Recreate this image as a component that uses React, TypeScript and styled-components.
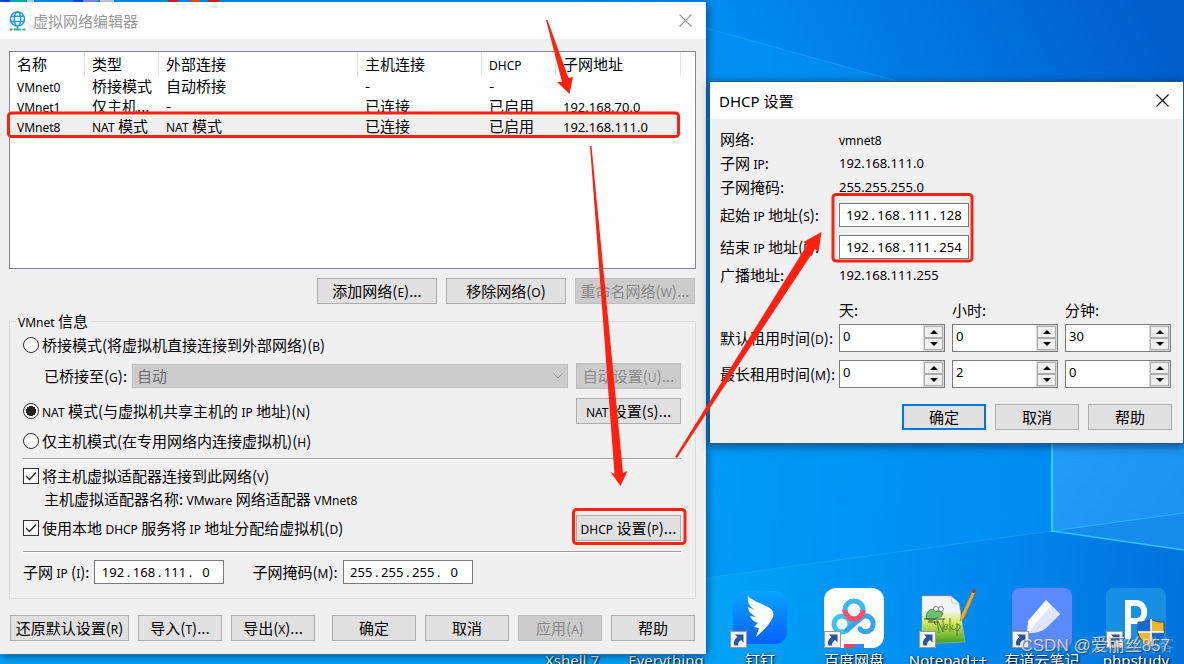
import React from "react";
import styled, { createGlobalStyle, css } from "styled-components";

const cjk = '"Noto Sans CJK SC", sans-serif';
const latin = '"Noto Sans", "Noto Sans CJK SC", sans-serif';
const RED = "#ff2010";

const Global = createGlobalStyle`
  *, *::before, *::after { box-sizing: border-box; }
  body { margin: 0; overflow: hidden; }
  button, input, select { font: inherit; color: inherit; margin: 0; }
`;

const Desktop = styled.main`
  position: relative;
  width: 100%;
  height: 100vh;
  overflow: hidden;
  background: #0090f0;
  font-family: ${cjk};
  font-size: 15px;
  line-height: 20px;
  color: #000;
`;

const Layer = styled.svg`
  position: absolute;
  left: 0;
  top: 0;
  pointer-events: none;
`;

const Window = styled.section<{ $x: number; $y: number; $w: number; $active?: boolean }>`
  position: absolute;
  left: ${(p) => p.$x}px;
  top: ${(p) => p.$y}px;
  width: ${(p) => p.$w}px;
  background: #f0f0f0;
  box-shadow: 1px 2px 9px rgba(0, 20, 60, 0.6);
  ${(p) => p.$active && css`border: 1px solid #1c5a8c;`}
`;

const TitleBar = styled.header<{ $muted?: boolean }>`
  display: flex;
  align-items: center;
  gap: 7px;
  height: 37px;
  padding: 0 14px 0 9px;
  background: #fff;
  font-family: ${latin};
  color: ${(p) => (p.$muted ? "#999" : "#000")};
`;

const Title = styled.h1`
  flex: 1;
  margin: 0;
  font-size: 15px;
  font-weight: 400;
`;

const CloseButton = styled.button`
  display: flex;
  padding: 0;
  border: 0;
  background: none;
`;

const Latin = styled.span`
  font-family: ${latin};
  font-size: 12px;
  line-height: 12px;
`;

const Address = styled.span`
  font-family: ${latin};
  font-size: 13px;
  line-height: 12px;
`;

/* Latin runs are set smaller than the Chinese text around them. */
function T({ s }: { s: string }) {
  return (
    <>
      {s.split(/([A-Za-z0-9]+)/).map((part, i) => (i % 2 ? <Latin key={i}>{part}</Latin> : part))}
    </>
  );
}

const MainBody = styled.div`
  padding: 12px 10px 13px 9px;
`;

const ListBox = styled.div`
  height: 218px;
  border: 1px solid #828790;
  background: #fff;
`;

const NetTable = styled.table`
  width: 671px;
  table-layout: fixed;
  border-collapse: separate;
  border-spacing: 0;
`;

const HeadCell = styled.th<{ $w: number }>`
  width: ${(p) => p.$w}px;
  height: 24px;
  padding: 0 0 0 7px;
  border-right: 1px solid #e5e5e5;
  font-weight: 400;
  text-align: left;
`;

const Row = styled.tr<{ $selected?: boolean }>`
  background: ${(p) => (p.$selected ? "#f0f0f0" : "transparent")};
`;

const Cell = styled.td`
  height: 20px;
  padding: 0 0 0 7px;
  white-space: nowrap;
`;

const Button = styled.button<{ $w: number; $primary?: boolean }>`
  flex: none;
  width: ${(p) => p.$w}px;
  height: 26px;
  padding: 0;
  border: ${(p) => (p.$primary ? "2px solid #0078d7" : "1px solid #adadad")};
  background: #e1e1e1;
  line-height: 20px;
  white-space: nowrap;
  &:disabled {
    border-color: #bfbfbf;
    background: #ccc;
    color: #8a8a8a;
  }
`;

const ListActions = styled.div`
  display: flex;
  justify-content: flex-end;
  gap: 9px;
  padding: 9px 1px 0 0;
`;

const Group = styled.fieldset`
  min-width: 0;
  margin: 7px 0 0;
  padding: 0 14px 11px 13px;
  border: 1px solid #dcdcdc;
`;

const Legend = styled.legend`
  margin-left: -7px;
  padding: 0 2px;
`;

const Line = styled.div<{ $h: number; $indent?: boolean }>`
  display: flex;
  align-items: center;
  gap: 3px;
  height: ${(p) => p.$h}px;
  padding-left: ${(p) => (p.$indent ? 21 : 0)}px;
`;

const Push = styled.span`
  margin-left: auto;
  display: flex;
`;

const Rule = styled.hr`
  height: 2px;
  margin: 5px 0 4px;
  border: 0;
  border-top: 1px solid #a0a0a0;
  background: #fff;
`;

const Radio = styled.input.attrs({ type: "radio" })`
  appearance: none;
  flex: none;
  width: 16px;
  height: 16px;
  border: 1px solid #333;
  border-radius: 50%;
  background: #fff;
  &:checked {
    background: radial-gradient(circle, #222 0 5px, #fff 5px);
  }
`;

const CheckWrap = styled.span`
  position: relative;
  display: flex;
  width: 16px;
  height: 16px;
  svg {
    position: absolute;
    left: 0;
    top: 0;
    pointer-events: none;
  }
`;

const Check = styled.input.attrs({ type: "checkbox" })`
  appearance: none;
  width: 16px;
  height: 16px;
  border: 1px solid #333;
  background: #fff;
`;

const SelectWrap = styled.span`
  position: relative;
  display: flex;
  flex: 1;
  margin: 0 5px 0 2px;
  svg {
    position: absolute;
    right: 5px;
    top: 9px;
    pointer-events: none;
  }
`;

const Select = styled.select`
  appearance: none;
  width: 100%;
  height: 24px;
  padding: 0 4px;
  border: 1px solid #bfbfbf;
  border-radius: 0;
  background: #ccc;
  line-height: 20px;
  &:disabled {
    color: #6d6d6d;
    opacity: 1;
  }
`;

const IpBox = styled.span`
  display: flex;
  align-items: center;
  width: 130px;
  height: 24px;
  padding: 0 0 0 5px;
  border: 1px solid #7a7a7a;
  background: #fff;
  font-family: ${latin};
  font-size: 13px;
`;

const Octet = styled.input`
  width: 25px;
  height: 20px;
  padding: 0;
  border: 0;
  background: none;
  text-align: center;
  line-height: 20px;
`;

const Dot = styled.span`
  width: 6px;
  text-align: center;
`;

function IpField({ id, value }: { id: string; value: string }) {
  return (
    <IpBox>
      {value.split(".").map((octet, i) => (
        <React.Fragment key={i}>
          {i > 0 && <Dot>.</Dot>}
          <Octet id={i === 0 ? id : undefined} aria-label={i ? `${id} ${i + 1}` : undefined} defaultValue={octet} />
        </React.Fragment>
      ))}
    </IpBox>
  );
}

const MaskLabel = styled.label`
  margin-left: 23px;
`;

const FieldLine = styled(Line)`
  gap: 5px;
`;

const Footer = styled.footer`
  display: flex;
  justify-content: space-between;
  padding: 16px 1px 0;
`;

const ButtonSet = styled.div`
  display: flex;
  gap: 9px;
`;

const DhcpBody = styled.div`
  padding: 8px 11px 13px 10px;
`;

const Info = styled.div<{ $h?: number }>`
  display: grid;
  grid-template-columns: 119px 1fr;
  align-items: center;
  height: ${(p) => p.$h ?? 24}px;
  white-space: nowrap;
`;

const LeaseGrid = styled.div`
  display: grid;
  grid-template-columns: 112px repeat(3, 106px);
  grid-template-rows: 20px 36px 36px;
  column-gap: 7px;
  align-items: center;
  margin: 13px 0 12px;
  white-space: nowrap;
`;

const Spin = styled.span`
  display: flex;
  height: 28px;
  border: 1px solid #7a7a7a;
  background: #fff;
`;

const SpinInput = styled.input`
  flex: 1;
  min-width: 0;
  height: 22px;
  padding: 0 3px;
  border: 0;
  background: none;
  font-family: ${latin};
  font-size: 13px;
`;

const SpinButtons = styled.span`
  display: flex;
  flex-direction: column;
  width: 21px;
  padding: 1px;
  background: #d8d8d8;
`;

const SpinButton = styled.button`
  display: flex;
  flex: 1;
  align-items: center;
  justify-content: center;
  padding: 0;
  border: 1px solid #acacac;
  background: #f0f0f0;
`;

function SpinField({ label, value }: { label: string; value: string }) {
  return (
    <Spin>
      <SpinInput aria-label={label} defaultValue={value} />
      <SpinButtons>
        <SpinButton aria-label={label + " +"}>
          <svg width="8" height="4"><path d="M0 4L4 0L8 4Z" /></svg>
        </SpinButton>
        <SpinButton aria-label={label + " -"}>
          <svg width="8" height="4"><path d="M0 0L4 4L8 0Z" /></svg>
        </SpinButton>
      </SpinButtons>
    </Spin>
  );
}

const DialogButtons = styled.div`
  display: flex;
  justify-content: flex-end;
  gap: 9px;
`;

const Shortcuts = styled.nav`
  position: absolute;
  left: 525px;
  top: 588px;
  display: flex;
  color: #fff;
  font-family: ${latin};
`;

const Shortcut = styled.a`
  display: flex;
  flex-direction: column;
  align-items: center;
  gap: 2px;
  width: 94px;
  color: #fff;
  text-decoration: none;
  white-space: nowrap;
  text-shadow: 1px 1px 2px #000, 0 0 2px rgba(0, 0, 0, 0.6);
  svg {
    overflow: visible;
  }
`;

const Watermark = styled.div`
  position: absolute;
  right: 14px;
  top: 636px;
  font-family: "Liberation Sans", "Noto Sans CJK SC", sans-serif;
  font-size: 17px;
  color: rgba(235, 235, 235, 0.8);
  text-shadow: 1px 1px 1px rgba(60, 60, 60, 0.7);
`;

const FaintMark = styled(Watermark)`
  right: 10px;
  font-size: 16px;
  color: rgba(200, 215, 235, 0.35);
  text-shadow: none;
`;

function Cross({ color }: { color: string }) {
  return (
    <svg width="13" height="13" viewBox="0 0 13 13" stroke={color} strokeWidth="1.1">
      <path d="M.5.5L12.5 12.5M12.5.5L.5 12.5" />
    </svg>
  );
}

function Tick() {
  return (
    <svg width="16" height="16" fill="none" stroke="#222" strokeWidth="1.3">
      <path d="M3 8L6.500 11.500L13 4.500" />
    </svg>
  );
}

function GlobeIcon() {
  return (
    <svg width="17" height="20" viewBox="0 0 17 20" fill="none" stroke="#1e9ad0" strokeWidth="1.5">
      <circle cx="8.500" cy="8" r="7" />
      <ellipse cx="8.500" cy="8" rx="3.300" ry="7" />
      <path d="M2 5.300H15M1.500 10.500H15.500M8.500 15V18" />
      <path d="M.5 18.500H16.500" stroke="#3aa890" strokeWidth="1.800" strokeDasharray="3 1.500 7 1.500" />
    </svg>
  );
}

function ShortcutArrow({ x = 0 }: { x?: number }) {
  return (
    <g transform={`translate(${x} 43)`}>
      <rect x=".5" y=".5" width="16" height="16" fill="#f4f4f4" stroke="#9a9a9a" />
      <path d="M5 3.500H13.500V11.500L11 9C8.500 10.500 7.800 12.500 8.300 14.500H4.500C3.200 11 4.500 8 7.500 6Z" fill="#2a5597" />
    </g>
  );
}

function DingIcon() {
  return (
    <svg width="60" height="60">
      <defs>
        <linearGradient id="ding" x1="0" y1="0" x2="0" y2="1">
          <stop offset="0" stopColor="#0aa5ff" />
          <stop offset="1" stopColor="#0560fb" />
        </linearGradient>
      </defs>
      <rect x="3" y="3" width="54" height="53" rx="12" fill="url(#ding)" />
      <path d="M18 8C22 13 38 18 41 21C44 24 44 28 42 31C39 37 32 44 26 49L29 40L24 39L28 35C24 34 21 31 20 28L26 29C21 26 18 23 18 19L25 22C19 18 17 14 18 8Z" fill="#fff" />
      <ShortcutArrow />
    </svg>
  );
}

function BaiduIcon() {
  return (
    <svg width="60" height="60" fill="none">
      <rect width="60" height="60" rx="12" fill="#fff" />
      <g strokeWidth="5">
        <circle cx="18" cy="36" r="8" stroke="#38c6ee" />
        <path d="M23 42L37 30C43 25 50 30 49 37C48 44 40 46 36 41" stroke="#35a5f2" strokeLinecap="round" />
        <circle cx="30" cy="22" r="9" stroke="#3eb6f0" />
        <path d="M21 22A9 9 0 0 0 39 22" stroke="#ff5068" />
      </g>
      <path d="M20 56H30V60H20Z" fill="#f04460" />
      <path d="M30 56H40V60H30Z" fill="#3a86f8" />
      <ShortcutArrow />
    </svg>
  );
}

function NotepadIcon() {
  return (
    <svg width="60" height="60" fill="none">
      <defs>
        <linearGradient id="pad" x1="0" y1="0" x2="0" y2="1">
          <stop offset=".3" stopColor="#f4f6f4" />
          <stop offset=".55" stopColor="#d6e860" />
          <stop offset="1" stopColor="#3c9c1c" />
        </linearGradient>
      </defs>
      <path d="M4 8H33L41 15L47 54L4 56Z" fill="url(#pad)" stroke="#b4bab4" strokeWidth=".6" />
      <path d="M33 8L34 15L41 15Z" fill="#fff" stroke="#aaa" strokeWidth=".6" />
      <path d="M5 7H33" stroke="#778" strokeWidth="2" strokeDasharray="1 1.500" />
      <path d="M8 30C8 22 15 19 20 23L25 25L23 29C19 28 17 33 12 33Z" fill="#6cc070" stroke="#2c6c30" strokeWidth=".7" />
      <path d="M6 31H27M10 34H20M16 34L18 37" stroke="#222" strokeWidth=".8" />
      <circle cx="18" cy="21" r="2.500" fill="#fff" stroke="#555" strokeWidth=".7" />
      <circle cx="23" cy="21" r="2.500" fill="#fff" stroke="#555" strokeWidth=".7" />
      <path d="M19 32L21 45M20 33L25 44V31M28 36C25 38 26 44 29 41V36M32 30V44M35 37C32 41 35 44 38 40M39 35V48M39 37C43 35 43 41 39 43" stroke="#406020" strokeWidth=".8" />
      <path d="M42 33L43 28L54 4L57 5L46 30Z" fill="#f6a91c" stroke="#b87010" strokeWidth=".5" />
      <path d="M54 4L55 1L58 2L57 5Z" fill="#b13b20" />
      <ShortcutArrow x={1} />
    </svg>
  );
}

function YoudaoIcon() {
  return (
    <svg width="60" height="60">
      <rect width="60" height="60" rx="8" fill="#5b8aff" />
      <path d="M16 33L34 12L48 26L34 40L26 44L15 45Z" fill="#fff" />
      <path d="M48 26L34 40C30 44 22 45 15 45L39 18Z" fill="#dfe6ff" />
      <ShortcutArrow />
    </svg>
  );
}

function PhpIcon() {
  return (
    <svg width="60" height="60">
      <rect width="60" height="60" rx="8" fill="#1590e4" />
      <path d="M22 51V15H30C41 15 41 33 30 33H22" fill="none" stroke="#fff" strokeWidth="6" />
      <ShortcutArrow />
      <path d="M45 31C49 34 54 34 58 34V43C58 51 51 56 45 58C39 56 32 51 32 43V34C37 34 41 34 45 31Z" fill="#f6b62c" stroke="#28486a" />
      <path d="M45 31C41 34 37 34 32 34V44H45ZM45 44H58C58 52 51 56 45 58Z" fill="#1a68c8" />
      <path d="M45 31V58M32 44H58" stroke="#fff" strokeWidth="1.500" />
    </svg>
  );
}

function Wallpaper() {
  return (
    <Layer width="100%" height="100%" viewBox="0 0 1184 664" preserveAspectRatio="none" aria-hidden="true">
      <defs>
        <linearGradient id="sky" x1="706" y1="300" x2="1184" y2="60" gradientUnits="userSpaceOnUse">
          <stop offset="0" stopColor="#0099f0" />
          <stop offset=".3" stopColor="#008af0" />
          <stop offset="1" stopColor="#005dcc" />
        </linearGradient>
        <linearGradient id="floor" x1="706" y1="560" x2="1184" y2="600" gradientUnits="userSpaceOnUse">
          <stop offset="0" stopColor="#00a4f8" />
          <stop offset=".6" stopColor="#0088ee" />
          <stop offset="1" stopColor="#0072dc" />
        </linearGradient>
        <linearGradient id="pane" x1="1052" y1="443" x2="1184" y2="530" gradientUnits="userSpaceOnUse">
          <stop offset="0" stopColor="#229cfa" />
          <stop offset="1" stopColor="#1a92f2" />
        </linearGradient>
      </defs>
      <rect width="1184" height="450" fill="url(#sky)" />
      <rect y="440" width="1184" height="224" fill="url(#floor)" />
      <path d="M706 28L900 82H706Z" fill="#0098fa" opacity=".35" />
      <path d="M706 28L900 82" stroke="#25a4ff" opacity=".6" />
      <path d="M706 440H1052V531L706 578Z" fill="#0094f6" opacity=".5" />
      <path d="M706 578L1052 531" stroke="#18a6fa" opacity=".7" />
      <path d="M1052 440H1184V550L1052 531Z" fill="url(#pane)" />
      <path d="M1052 531L1184 513V550Z" fill="#148cec" />
      <path d="M1052 531L1184 513" stroke="#2cb4fa" />
      <path d="M1052 531L1184 550" stroke="#30c4fa" strokeWidth="1.500" />
      <path d="M1052 440V532" stroke="#28d4f6" strokeWidth="2" />
      <path d="M0 0H10V2H0ZM73 0H83V2H73Z" fill="#0848d8" />
      <path d="M10 0H26V2H10Z" fill="#10c0c8" />
      <path d="M27 0H34V2H27ZM100 0H114V2H100Z" fill="#dce4ec" />
      <path d="M83 0H98V2H83Z" fill="#8c9cf0" />
      <path d="M168 0H178V2H168ZM208 0H219V2H208Z" fill="#e02818" />
      <path d="M190 0H200V2H190Z" fill="#e85c28" />
    </Layer>
  );
}

function Annotations() {
  return (
    <Layer width="1184" height="664" fill="none" stroke={RED} strokeWidth="3" aria-hidden="true">
      <rect x="8.500" y="113" width="670" height="23.500" rx="3" />
      <rect x="573.500" y="509.500" width="111.500" height="34" rx="3" />
      <rect x="833" y="194.500" width="139" height="66.500" rx="3" />
      <g fill={RED} stroke="none">
        <path d="M546 20L547.500 20L568.500 78L573 77L569.500 94L557 82L562 82Z" />
        <path d="M590 146L591.500 146L623 473L627.500 471L620.500 486L610.500 472L614.500 474Z" />
        <path d="M675 457L677 458L815 249L818.500 252L821.500 232L803.500 242L807 245Z" />
      </g>
    </Layer>
  );
}

const columns: [string, number][] = [
  ["名称", 75],
  ["类型", 74],
  ["外部连接", 199],
  ["主机连接", 124],
  ["DHCP", 74],
  ["子网地址", 125],
];

const networks = [
  ["VMnet0", "桥接模式", "自动桥接", "-", "-", ""],
  ["VMnet1", "仅主机...", "-", "已连接", "已启用", "192.168.70.0"],
  ["VMnet8", "NAT 模式", "NAT 模式", "已连接", "已启用", "192.168.111.0"],
];

const leases = [
  { label: "默认租用时间(D):", values: ["0", "0", "30"] },
  { label: "最长租用时间(M):", values: ["0", "2", "0"] },
];

const units = ["天:", "小时:", "分钟:"];

function NetworkEditor() {
  return (
    <Window $x={0} $y={2} $w={706}>
      <TitleBar $muted>
        <GlobeIcon />
        <Title>虚拟网络编辑器</Title>
        <CloseButton aria-label="关闭"><Cross color="#999" /></CloseButton>
      </TitleBar>
      <MainBody>
        <ListBox>
          <NetTable>
            <thead>
              <tr>
                {columns.map(([name, w]) => (
                  <HeadCell key={name} $w={w}><T s={name} /></HeadCell>
                ))}
              </tr>
            </thead>
            <tbody>
              {networks.map((n, r) => (
                <Row key={n[0]} $selected={r === 2}>
                  {n.map((v, c) => (
                    <Cell key={c}>{c === 5 ? <Address>{v}</Address> : <T s={v} />}</Cell>
                  ))}
                </Row>
              ))}
            </tbody>
          </NetTable>
        </ListBox>
        <ListActions>
          <Button $w={120}><T s="添加网络(E)..." /></Button>
          <Button $w={120}><T s="移除网络(O)" /></Button>
          <Button $w={120} disabled><T s="重命名网络(W)..." /></Button>
        </ListActions>
        <Group>
          <Legend><T s="VMnet 信息" /></Legend>
          <Line $h={28}>
            <Radio id="bridged" name="mode" />
            <label htmlFor="bridged"><T s="桥接模式(将虚拟机直接连接到外部网络)(B)" /></label>
          </Line>
          <Line $h={34} $indent>
            <label htmlFor="adapter"><T s="已桥接至(G):" /></label>
            <SelectWrap>
              <Select id="adapter" disabled><option>自动</option></Select>
              <svg width="10" height="6" fill="none" stroke="#999"><path d="M.5.5L5 5L9.500.5" /></svg>
            </SelectWrap>
            <Button $w={105} disabled><T s="自动设置(U)..." /></Button>
          </Line>
          <Line $h={36}>
            <Radio id="nat" name="mode" defaultChecked />
            <label htmlFor="nat"><T s="NAT 模式(与虚拟机共享主机的 IP 地址)(N)" /></label>
            <Push><Button $w={105}><T s="NAT 设置(S)..." /></Button></Push>
          </Line>
          <Line $h={24}>
            <Radio id="hostonly" name="mode" />
            <label htmlFor="hostonly"><T s="仅主机模式(在专用网络内连接虚拟机)(H)" /></label>
          </Line>
          <Rule />
          <Line $h={24}>
            <CheckWrap><Check id="connect" defaultChecked /><Tick /></CheckWrap>
            <label htmlFor="connect"><T s="将主机虚拟适配器连接到此网络(V)" /></label>
          </Line>
          <Line $h={22} $indent>
            <span><T s="主机虚拟适配器名称: VMware 网络适配器 VMnet8" /></span>
          </Line>
          <Line $h={36}>
            <CheckWrap><Check id="dhcp" defaultChecked /><Tick /></CheckWrap>
            <label htmlFor="dhcp"><T s="使用本地 DHCP 服务将 IP 地址分配给虚拟机(D)" /></label>
            <Push><Button $w={105}><T s="DHCP 设置(P)..." /></Button></Push>
          </Line>
          <Rule />
          <FieldLine $h={30}>
            <label htmlFor="subnet"><T s="子网 IP (I):" /></label>
            <IpField id="subnet" value="192.168.111.0" />
            <MaskLabel htmlFor="mask"><T s="子网掩码(M):" /></MaskLabel>
            <IpField id="mask" value="255.255.255.0" />
          </FieldLine>
        </Group>
        <Footer>
          <ButtonSet>
            <Button $w={119}><T s="还原默认设置(R)" /></Button>
            <Button $w={84}><T s="导入(T)..." /></Button>
            <Button $w={84}><T s="导出(X)..." /></Button>
          </ButtonSet>
          <ButtonSet>
            <Button $w={84}>确定</Button>
            <Button $w={84}>取消</Button>
            <Button $w={84} disabled><T s="应用(A)" /></Button>
            <Button $w={84}>帮助</Button>
          </ButtonSet>
        </Footer>
      </MainBody>
    </Window>
  );
}

function DhcpDialog() {
  return (
    <Window $x={709} $y={81} $w={475} $active>
      <TitleBar>
        <Title>DHCP 设置</Title>
        <CloseButton aria-label="关闭"><Cross color="#000" /></CloseButton>
      </TitleBar>
      <DhcpBody>
        <Info>网络:<span><T s="vmnet8" /></span></Info>
        <Info><span><T s="子网 IP:" /></span><Address>192.168.111.0</Address></Info>
        <Info>子网掩码:<Address>255.255.255.0</Address></Info>
        <Info $h={32}>
          <label htmlFor="start"><T s="起始 IP 地址(S):" /></label>
          <IpField id="start" value="192.168.111.128" />
        </Info>
        <Info $h={32}>
          <label htmlFor="end"><T s="结束 IP 地址(E):" /></label>
          <IpField id="end" value="192.168.111.254" />
        </Info>
        <Info>广播地址:<Address>192.168.111.255</Address></Info>
        <LeaseGrid>
          <span />
          {units.map((u) => <span key={u}>{u}</span>)}
          {leases.map((l) => (
            <React.Fragment key={l.label}>
              <span><T s={l.label} /></span>
              {l.values.map((v, i) => (
                <SpinField key={i} label={`${l.label} ${units[i]}`} value={v} />
              ))}
            </React.Fragment>
          ))}
        </LeaseGrid>
        <DialogButtons>
          <Button $w={84} $primary>确定</Button>
          <Button $w={84}>取消</Button>
          <Button $w={84}>帮助</Button>
        </DialogButtons>
      </DhcpBody>
    </Window>
  );
}

const shortcuts: [string, React.ReactNode][] = [
  ["Xshell 7", <svg width="60" height="60" />],
  ["Everything", <svg width="60" height="60" />],
  ["钉钉", <DingIcon />],
  ["百度网盘", <BaiduIcon />],
  ["Notepad++", <NotepadIcon />],
  ["有道云笔记", <YoudaoIcon />],
  ["phpstudy", <PhpIcon />],
];

export default function App() {
  return (
    <Desktop>
      <Global />
      <Wallpaper />
      <Shortcuts>
        {shortcuts.map(([name, icon]) => (
          <Shortcut key={name} href="#">
            {icon}
            <span>{name}</span>
          </Shortcut>
        ))}
      </Shortcuts>
      <NetworkEditor />
      <DhcpDialog />
      <FaintMark>@51CTO博客</FaintMark>
      <Watermark>CSDN @爱丽丝857</Watermark>
      <Annotations />
    </Desktop>
  );
}
